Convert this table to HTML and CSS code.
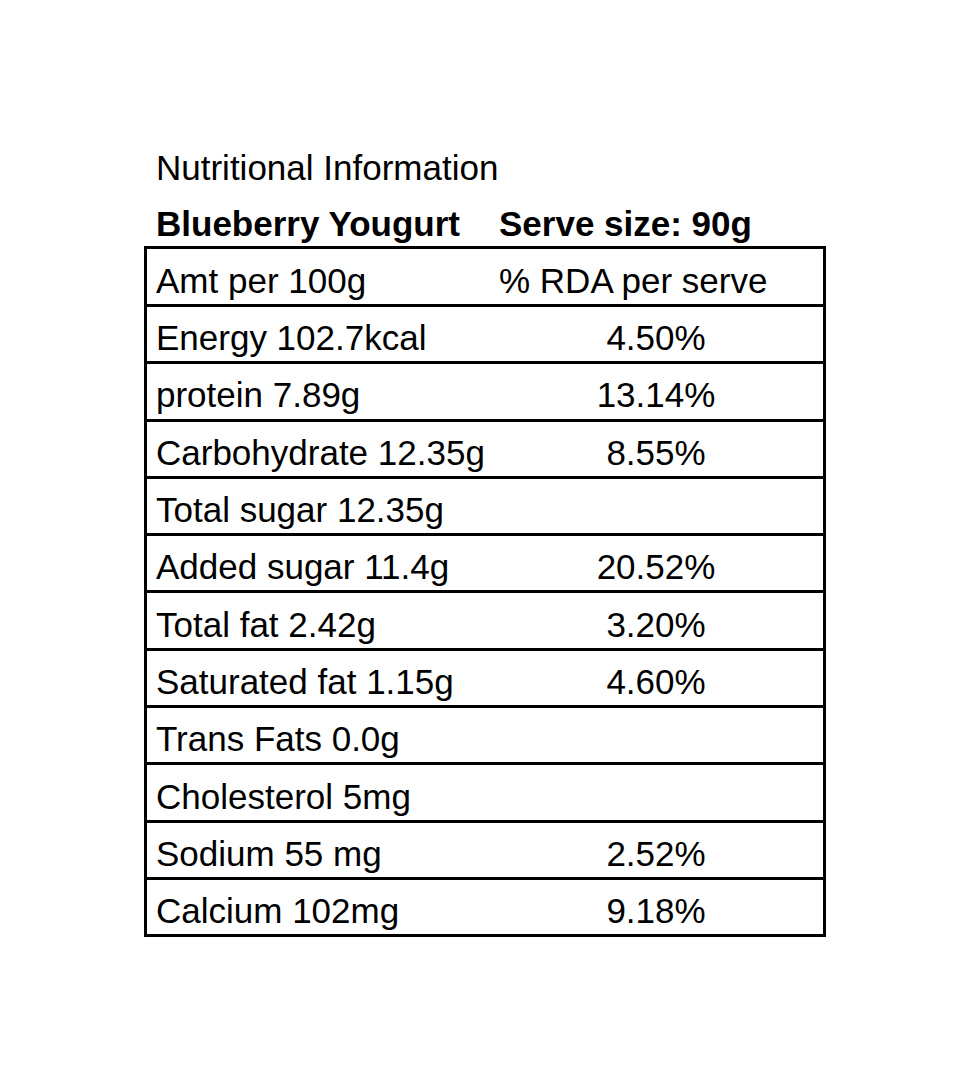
FILE: index.html
```html
<!DOCTYPE html>
<html>
<head>
<meta charset="utf-8">
<title>Nutritional Information</title>
<link rel="stylesheet" href="styles.css">
</head>
<body>
<div class="label">
  <div class="title">Nutritional Information</div>
  <div class="head">
    <div class="cell-a">Blueberry Yougurt</div>
    <div class="cell-b">Serve size: 90g</div>
  </div>
  <div class="table">
    <div class="row first"><div class="cell-a">Amt per 100g</div><div class="cell-b">% RDA per serve</div></div>
    <div class="row"><div class="cell-a">Energy 102.7kcal</div><div class="cell-b val">4.50%</div></div>
    <div class="row"><div class="cell-a">protein 7.89g</div><div class="cell-b val">13.14%</div></div>
    <div class="row"><div class="cell-a">Carbohydrate 12.35g</div><div class="cell-b val">8.55%</div></div>
    <div class="row"><div class="cell-a">Total sugar 12.35g</div><div class="cell-b val"></div></div>
    <div class="row"><div class="cell-a">Added sugar 11.4g</div><div class="cell-b val">20.52%</div></div>
    <div class="row"><div class="cell-a">Total fat 2.42g</div><div class="cell-b val">3.20%</div></div>
    <div class="row"><div class="cell-a">Saturated fat 1.15g</div><div class="cell-b val">4.60%</div></div>
    <div class="row"><div class="cell-a">Trans Fats 0.0g</div><div class="cell-b val"></div></div>
    <div class="row"><div class="cell-a">Cholesterol 5mg</div><div class="cell-b val"></div></div>
    <div class="row"><div class="cell-a">Sodium 55 mg</div><div class="cell-b val">2.52%</div></div>
    <div class="row last"><div class="cell-a">Calcium 102mg</div><div class="cell-b val">9.18%</div></div>
  </div>
</div>
</body>
</html>
```
FILE: styles.css
```css
html, body {
  margin: 0;
  padding: 0;
  background: #ffffff;
}
body {
  font-family: "Liberation Sans", Arial, sans-serif;
  font-size: 35px;
  color: #000000;
}
.label {
  width: 682px;
  padding: 148px 0 0 144px;
}
.title {
  line-height: 40px;
  padding-left: 12px;
}
.head {
  display: grid;
  grid-template-columns: 345px 1fr;
  margin-top: 16px;
  line-height: 40px;
  font-weight: bold;
}
.head .cell-a {
  padding-left: 12px;
}
.head .cell-b {
  padding-left: 10px;
}
.table {
  margin-top: 2px;
  border: 3px solid #000000;
}
.row {
  display: grid;
  grid-template-columns: 342px 1fr;
  height: 54.3px;
  line-height: 40px;
  border-bottom: 3px solid #000000;
  align-items: center;
}
.row.first {
  height: 55px;
}
.row.last {
  border-bottom: none;
}
.cell-a {
  padding-left: 9px;
  white-space: nowrap;
}
.row .cell-b {
  padding-left: 10px;
  white-space: nowrap;
}
.row .cell-b.val {
  padding-left: 0;
  text-align: center;
}
.row > div {
  padding-top: 8px;
}
```
